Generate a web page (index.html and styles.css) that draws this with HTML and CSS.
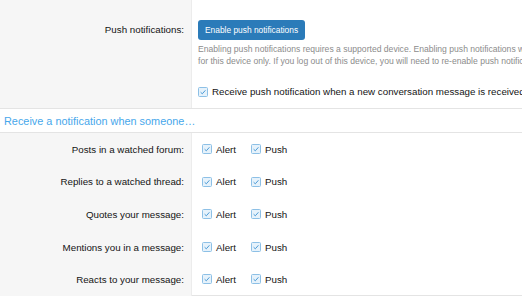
FILE: index.html
```html
<!DOCTYPE html>
<html lang="en-US">
  <head>
    <meta charset="utf-8" />
    <title>Notification preferences</title>
    <link rel="stylesheet" href="styles.css">
  </head>
  <body>
    <div class="formRow pushRow">
      <div class="rowLabel"><span class="labelText">Push notifications:</span></div>
      <div class="rowInput">
        <button class="button">Enable push notifications</button>
        <p class="explain">
          Enabling push notifications requires a supported device. Enabling push notifications will apply<br>
          for this device only. If you log out of this device, you will need to re-enable push notifications.
        </p>
        <label class="check topCheck">
          <svg class="box" width="10" height="10" viewBox="0 0 10 10"><rect x="0.5" y="0.5" width="9" height="9" rx="1" fill="#e6f2fb" stroke="#8dc0e6"/><path d="M2.6 5.2 L4.3 6.8 L7.4 3.3" fill="none" stroke="#4a9ad6" stroke-width="1"/></svg>
          Receive push notification when a new conversation message is received
        </label>
      </div>
    </div>

    <h3 class="blockHeading">Receive a notification when someone…</h3>

    <div class="formRow">
      <div class="rowLabel">Posts in a watched forum:</div>
      <div class="rowInput choices">
        <label class="check"><svg class="box" width="10" height="10" viewBox="0 0 10 10"><rect x="0.5" y="0.5" width="9" height="9" rx="1" fill="#e6f2fb" stroke="#8dc0e6"/><path d="M2.6 5.2 L4.3 6.8 L7.4 3.3" fill="none" stroke="#4a9ad6" stroke-width="1"/></svg>Alert</label>
        <label class="check"><svg class="box" width="10" height="10" viewBox="0 0 10 10"><rect x="0.5" y="0.5" width="9" height="9" rx="1" fill="#e6f2fb" stroke="#8dc0e6"/><path d="M2.6 5.2 L4.3 6.8 L7.4 3.3" fill="none" stroke="#4a9ad6" stroke-width="1"/></svg>Push</label>
      </div>
    </div>
    <div class="formRow">
      <div class="rowLabel">Replies to a watched thread:</div>
      <div class="rowInput choices">
        <label class="check"><svg class="box" width="10" height="10" viewBox="0 0 10 10"><rect x="0.5" y="0.5" width="9" height="9" rx="1" fill="#e6f2fb" stroke="#8dc0e6"/><path d="M2.6 5.2 L4.3 6.8 L7.4 3.3" fill="none" stroke="#4a9ad6" stroke-width="1"/></svg>Alert</label>
        <label class="check"><svg class="box" width="10" height="10" viewBox="0 0 10 10"><rect x="0.5" y="0.5" width="9" height="9" rx="1" fill="#e6f2fb" stroke="#8dc0e6"/><path d="M2.6 5.2 L4.3 6.8 L7.4 3.3" fill="none" stroke="#4a9ad6" stroke-width="1"/></svg>Push</label>
      </div>
    </div>
    <div class="formRow">
      <div class="rowLabel">Quotes your message:</div>
      <div class="rowInput choices">
        <label class="check"><svg class="box" width="10" height="10" viewBox="0 0 10 10"><rect x="0.5" y="0.5" width="9" height="9" rx="1" fill="#e6f2fb" stroke="#8dc0e6"/><path d="M2.6 5.2 L4.3 6.8 L7.4 3.3" fill="none" stroke="#4a9ad6" stroke-width="1"/></svg>Alert</label>
        <label class="check"><svg class="box" width="10" height="10" viewBox="0 0 10 10"><rect x="0.5" y="0.5" width="9" height="9" rx="1" fill="#e6f2fb" stroke="#8dc0e6"/><path d="M2.6 5.2 L4.3 6.8 L7.4 3.3" fill="none" stroke="#4a9ad6" stroke-width="1"/></svg>Push</label>
      </div>
    </div>
    <div class="formRow">
      <div class="rowLabel">Mentions you in a message:</div>
      <div class="rowInput choices">
        <label class="check"><svg class="box" width="10" height="10" viewBox="0 0 10 10"><rect x="0.5" y="0.5" width="9" height="9" rx="1" fill="#e6f2fb" stroke="#8dc0e6"/><path d="M2.6 5.2 L4.3 6.8 L7.4 3.3" fill="none" stroke="#4a9ad6" stroke-width="1"/></svg>Alert</label>
        <label class="check"><svg class="box" width="10" height="10" viewBox="0 0 10 10"><rect x="0.5" y="0.5" width="9" height="9" rx="1" fill="#e6f2fb" stroke="#8dc0e6"/><path d="M2.6 5.2 L4.3 6.8 L7.4 3.3" fill="none" stroke="#4a9ad6" stroke-width="1"/></svg>Push</label>
      </div>
    </div>
    <div class="formRow lastRow">
      <div class="rowLabel">Reacts to your message:</div>
      <div class="rowInput choices">
        <label class="check"><svg class="box" width="10" height="10" viewBox="0 0 10 10"><rect x="0.5" y="0.5" width="9" height="9" rx="1" fill="#e6f2fb" stroke="#8dc0e6"/><path d="M2.6 5.2 L4.3 6.8 L7.4 3.3" fill="none" stroke="#4a9ad6" stroke-width="1"/></svg>Alert</label>
        <label class="check"><svg class="box" width="10" height="10" viewBox="0 0 10 10"><rect x="0.5" y="0.5" width="9" height="9" rx="1" fill="#e6f2fb" stroke="#8dc0e6"/><path d="M2.6 5.2 L4.3 6.8 L7.4 3.3" fill="none" stroke="#4a9ad6" stroke-width="1"/></svg>Push</label>
      </div>
    </div>
  </body>
</html>
```
FILE: styles.css
```css
html {
  font-family: "Liberation Sans", Arial, sans-serif;
  font-size: 9.75px;
  color: #141414;
}

body {
  margin: 0;
  width: 522px;
  height: 300px;
  overflow: hidden;
  background-color: #fff;
}

.formRow {
  display: flex;
  height: 32.6px;
}

.rowLabel {
  width: 184px;
  flex: none;
  padding-right: 7px;
  background-color: #f6f6f6;
  border-right: 1px solid #ececec;
  display: flex;
  align-items: center;
  justify-content: flex-end;
}

.rowInput {
  flex: 1;
  display: flex;
  align-items: center;
  padding-left: 10px;
}

.lastRow .rowInput {
  border-bottom: 1px solid #e4e4e4;
}

.pushRow {
  height: 108px;
}

.pushRow .rowLabel {
  align-items: flex-start;
  padding-top: 24px;
  height: 84px;
}

.pushRow .rowInput {
  flex-direction: column;
  align-items: flex-start;
  padding-left: 6px;
  padding-top: 20px;
  white-space: nowrap;
  overflow: hidden;
}

.button {
  height: 20px;
  padding: 0 7px;
  border: none;
  border-radius: 3px;
  background-color: #2b7bb9;
  color: #fff;
  font-family: inherit;
  font-size: 8.4px;
}

.explain {
  margin: 3px 0 0;
  font-size: 8.6px;
  line-height: 12px;
  color: #8c8c8c;
}

.topCheck {
  margin-top: 19px;
}

.blockHeading {
  margin: 0;
  height: 23px;
  padding-left: 4px;
  display: flex;
  align-items: center;
  font-size: 10.9px;
  font-weight: normal;
  color: #47a7eb;
  background-color: #fff;
  border-top: 1px solid #e4e4e4;
  border-bottom: 1px solid #e4e4e4;
}

.choices {
  gap: 15px;
}

.check {
  display: flex;
  align-items: center;
}

.box {
  margin-right: 4px;
  flex: none;
}
```
